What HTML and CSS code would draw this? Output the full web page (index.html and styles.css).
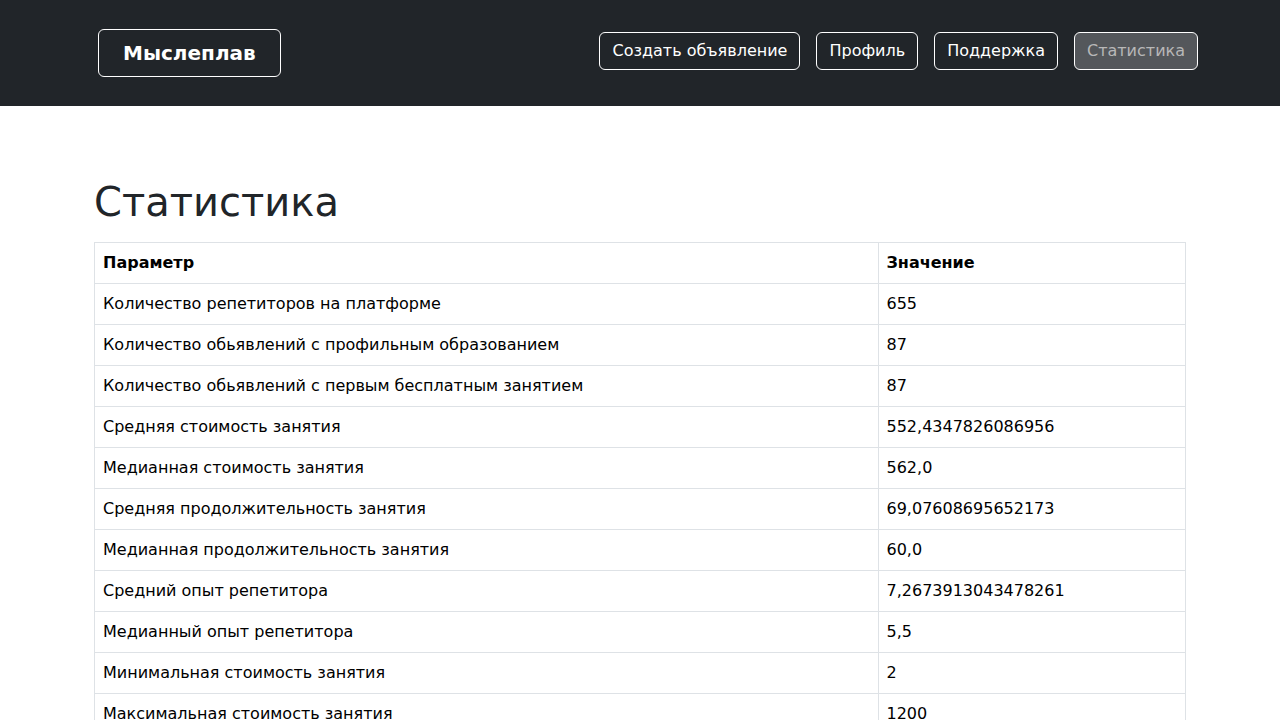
FILE: index.html
```html
<!DOCTYPE html>
<html lang="ru">
<head>
<meta charset="utf-8">
<meta name="viewport" content="width=device-width, initial-scale=1">
<title>Статистика — Мыслеплав</title>
<link rel="stylesheet" href="styles.css">
</head>
<body>
<header class="site-header">
  <div class="header-inner">
    <a class="brand" href="#">Мыслеплав</a>
    <nav class="nav">
      <a class="nav-link" href="#">Создать объявление</a>
      <a class="nav-link" href="#">Профиль</a>
      <a class="nav-link" href="#">Поддержка</a>
      <a class="nav-link nav-link-active" href="#" aria-current="page">Статистика</a>
    </nav>
  </div>
</header>
<main class="content">
  <h1 class="title">Статистика</h1>
  <table class="stats">
    <thead>
      <tr><th scope="col">Параметр</th><th scope="col">Значение</th></tr>
    </thead>
    <tbody>
      <tr><td>Количество репетиторов на платформе</td><td>655</td></tr>
      <tr><td>Количество обьявлений с профильным образованием</td><td>87</td></tr>
      <tr><td>Количество обьявлений с первым бесплатным занятием</td><td>87</td></tr>
      <tr><td>Средняя стоимость занятия</td><td>552,4347826086956</td></tr>
      <tr><td>Медианная стоимость занятия</td><td>562,0</td></tr>
      <tr><td>Средняя продолжительность занятия</td><td>69,07608695652173</td></tr>
      <tr><td>Медианная продолжительность занятия</td><td>60,0</td></tr>
      <tr><td>Средний опыт репетитора</td><td>7,2673913043478261</td></tr>
      <tr><td>Медианный опыт репетитора</td><td>5,5</td></tr>
      <tr><td>Минимальная стоимость занятия</td><td>2</td></tr>
      <tr><td>Максимальная стоимость занятия</td><td>1200</td></tr>
    </tbody>
  </table>
</main>
</body>
</html>
```

FILE: styles.css
```css
* {
  box-sizing: border-box;
}

html {
  scrollbar-width: none;
}

body {
  margin: 0;
  font-family: "DejaVu Sans", sans-serif;
  font-size: 16px;
  line-height: 24px;
  color: #212529;
  background: #fff;
}

.site-header {
  padding: 29px 12px 29px 28px;
  background: #212529;
}

.header-inner {
  display: flex;
  justify-content: space-between;
  align-items: center;
  flex-wrap: wrap;
  gap: 16px;
  max-width: 1100px;
  margin: 0 auto;
}

.brand {
  padding: 8px 24px;
  border: 1px solid #fff;
  border-radius: 6px;
  color: #fff;
  font-size: 20px;
  font-weight: bold;
  line-height: 30px;
  text-decoration: none;
}

.nav {
  display: flex;
  flex-wrap: wrap;
  gap: 16px;
  padding-bottom: 4px;
}

.nav-link {
  padding: 6px 12px;
  border: 1px solid #fff;
  border-radius: 6px;
  color: #fff;
  text-decoration: none;
}

.nav-link-active {
  background: #54575b;
  color: #b8b8b8;
}

.content {
  max-width: 1116px;
  margin: 0 auto;
  padding: 72px 12px 48px;
}

.title {
  margin: 0 0 16px;
  font-size: 40px;
  font-weight: normal;
  line-height: 48px;
}

.stats {
  width: 100%;
  border-collapse: collapse;
  color: #000;
}

.stats th,
.stats td {
  padding: 8px;
  border: 1px solid #dee2e6;
  text-align: left;
  vertical-align: top;
}
```
